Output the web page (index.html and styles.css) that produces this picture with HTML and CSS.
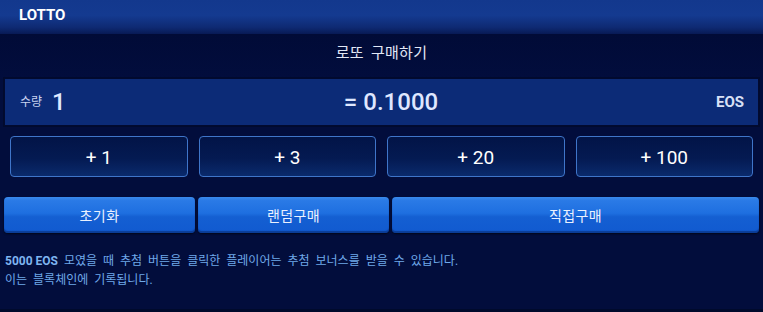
FILE: index.html
```html
<!DOCTYPE html>
<html lang="ko">
<head>
<meta charset="utf-8">
<link rel="stylesheet" href="styles.css">
</head>
<body>
<div class="panel">
  <div class="header"><span class="brand">LOTTO</span></div>
  <div class="title">로또 구매하기</div>
  <div class="amount">
    <div class="qty"><span class="qty-label">수량</span><span class="qty-val">1</span></div>
    <div class="price">= 0.1000</div>
    <div class="unit">EOS</div>
  </div>
  <div class="plus-row">
    <button class="plus">+ 1</button>
    <button class="plus">+ 3</button>
    <button class="plus">+ 20</button>
    <button class="plus">+ 100</button>
  </div>
  <div class="action-row">
    <button class="action">초기화</button>
    <button class="action">랜덤구매</button>
    <button class="action wide">직접구매</button>
  </div>
  <div class="info">
    <p><b>5000 EOS</b> 모였을 때 추첨 버튼을 클릭한 플레이어는 추첨 보너스를 받을 수 있습니다.</p>
    <p>이는 블록체인에 기록됩니다.</p>
  </div>
</div>
</body>
</html>
```
FILE: styles.css
```css
* { box-sizing: border-box; }
html, body { margin: 0; padding: 0; }
body {
  width: 763px;
  height: 312px;
  overflow: hidden;
  background: #020d3c;
  font-family: Roboto, "Noto Sans CJK KR", sans-serif;
}
.panel {
  height: 312px;
  background: #020d3c;
  border-bottom: 3px solid #000a2c;
}
.header {
  height: 34px;
  background: linear-gradient(to bottom, #13388d 0%, #143a90 45%, #0e2a73 80%, #081a55 100%);
  display: flex;
  align-items: center;
  padding-left: 19px;
  padding-bottom: 4px;
}
.brand {
  color: #ffffff;
  font-weight: 700;
  font-size: 15px;
}
.title {
  height: 44px;
  background: linear-gradient(to bottom, #010b37 0%, #020d3d 100%);
  color: #e2e8f6;
  font-size: 15px;
  text-align: center;
  line-height: 38px;
  word-spacing: 3px;
  letter-spacing: 0.3px;
}
.amount {
  margin: 0 4px;
  height: 48px;
  background: #0c2b77;
  border: 1px solid #020a30;
  box-shadow: 0 0 0 1px #010a2e;
  display: grid;
  grid-template-columns: 1fr auto 1fr;
  align-items: center;
  padding: 0 14px 0 15px;
}
.qty { display: flex; align-items: center; gap: 10px; }
.qty-label { color: #c9d4f0; font-size: 12px; margin-top: -3px; }
.qty-val { color: #dfe7ff; font-size: 24px; font-weight: 500; margin-top: -1px; }
.price { color: #dfe7ff; font-size: 24px; font-weight: 500; margin-top: -1px; margin-left: 18px; }
.unit { justify-self: end; color: #d8e0f6; font-size: 15px; font-weight: 700; }
.plus-row {
  display: flex;
  gap: 11px;
  padding: 0 10px;
  margin-top: 10px;
}
.plus {
  flex: 1;
  height: 41px;
  border: 1px solid #3f75c9;
  border-radius: 4px;
  background: linear-gradient(to bottom, #021447 0%, #041a52 55%, #0a2a6c 100%);
  color: #ffffff;
  font-family: Roboto, "Noto Sans CJK KR", sans-serif;
  font-size: 19px;
  padding: 2px 0 0;
}
.action-row {
  display: flex;
  gap: 3px;
  padding: 0 4px;
  margin-top: 20px;
}
.action {
  flex: 191px 0 0;
  height: 36px;
  border: none;
  border-radius: 4px;
  background: linear-gradient(to bottom, #3a8aec 0%, #2a7ae6 10%, #1e6fe0 45%, #145fd2 55%, #115ad0 100%);
  box-shadow: inset 0 -2px 1px rgba(6, 30, 90, 0.5), 0 1px 2px rgba(0, 0, 0, 0.6);
  color: #eaf1ff;
  font-family: Roboto, "Noto Sans CJK KR", sans-serif;
  font-size: 14px;
  letter-spacing: 0.4px;
  padding: 0 0 1px;
}
.action.wide { flex: 1; }
.info {
  margin-top: 19px;
  padding-left: 5px;
  color: #70a9ea;
  font-size: 12px;
  word-spacing: 3px;
}
.info p { margin: 0; line-height: 19px; }
.info b { font-weight: 700; color: #7eb4f0; word-spacing: 0; }
```
